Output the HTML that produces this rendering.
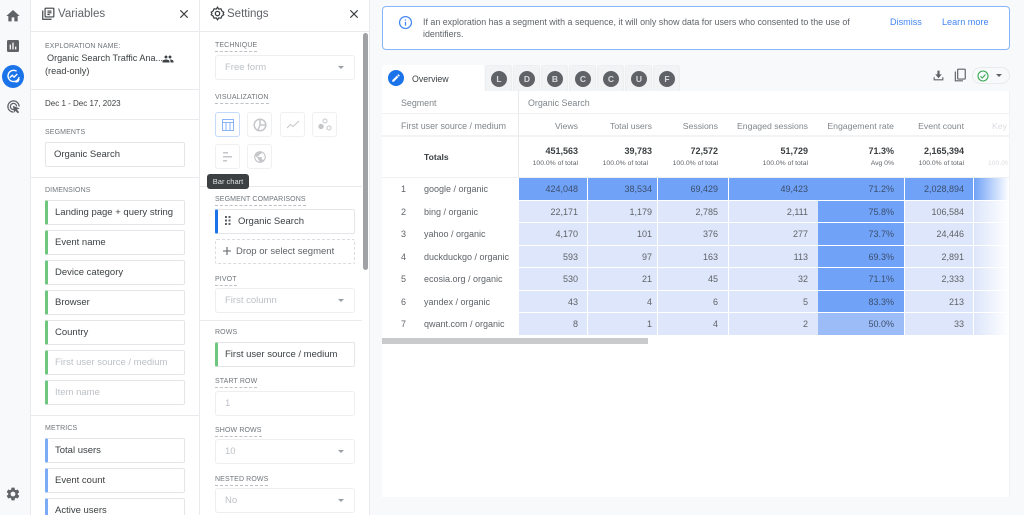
<!DOCTYPE html>
<html><head><meta charset="utf-8">
<style>
*{box-sizing:border-box;margin:0;padding:0}
html,body{width:1024px;height:515px;overflow:hidden;background:#f8f9fa}
body{font-family:"Liberation Sans",sans-serif;color:#5f6368;position:relative;filter:blur(.35px)}
.a{position:absolute;white-space:nowrap}
svg{position:absolute;display:block}
.line{position:absolute;background:#e8eaed;height:1px}
.t{position:absolute;white-space:nowrap;font-size:9.2px;line-height:12px}
.lab{position:absolute;white-space:nowrap;font-size:7px;line-height:10px;letter-spacing:.12px;color:#70757a;margin-top:1px}
.dash{border-bottom:1px dashed #bdc1c6;line-height:9px;padding-bottom:1px;margin-top:0}
.chip{position:absolute;width:140px;height:25px;background:#fff;border:1px solid #e3e5e8;border-radius:2px;font-size:9.5px;line-height:24px;color:#3c4043;white-space:nowrap}
.v{left:45px;padding-left:9px}
.s{left:215px;padding-left:9px}
.g{border-left:3px solid #6fc77f;padding-left:7px}
.b{border-left:3px solid #7baaf7;padding-left:7px}
.off{color:#bdc1c6}
.sel{position:absolute;left:215px;width:140px;height:25px;background:#fff;border:1px solid #eceef0;border-radius:3px;font-size:9.5px;line-height:24px;color:#bdc1c6;padding-left:9px}
.sel i{position:absolute;right:10px;top:10px;width:0;height:0;border:3px solid transparent;border-top:3px solid #9aa0a6;border-bottom:0}
.vb{position:absolute;width:25px;height:25px;background:#fff;border:1px solid #eff0f2;border-radius:3px}
.tab{position:absolute;top:65px;height:26px;width:27px;background:#f1f3f4;border:1px solid #eceef0;border-bottom:0;border-radius:3px 3px 0 0}
.tab b{position:absolute;left:5px;top:5px;width:16px;height:16px;border-radius:50%;background:#5f6368;color:#d8dadd;font-size:8.5px;line-height:16px;text-align:center;font-weight:bold}
.cell{position:absolute;top:0;height:21.5px;line-height:23px;text-align:right;font-size:9px;color:#5f6368;padding-right:4px}
.n{position:absolute;left:401px;font-size:9px;line-height:23px;top:0;color:#5f6368}
.d{position:absolute;left:424px;font-size:9px;line-height:23px;top:0;color:#5f6368;white-space:nowrap}
.row{position:absolute;left:0;width:1024px;height:21.5px}
.c1{left:519px;width:68px;padding-right:9px}
.c2{left:588px;width:69px;padding-right:5px}
.c3{left:658px;width:70px;padding-right:10px}
.c4{left:729px;width:89px;padding-right:10px}
.c5{left:818px;width:86px;padding-right:10px}
.c6{left:905px;width:68px;padding-right:9px}
.c7{left:974px;width:35px;background:linear-gradient(90deg,#dde6fa,#fff)}
.l{background:#dde6fa}
.h{background:#70a2f7;color:#3c4f6e}
.m{background:#9cbcf8;color:#3c4f6e}
.hd{position:absolute;top:120px;font-size:8.7px;line-height:13px;color:#80868b;text-align:right}
.tot{position:absolute;top:145px;font-size:9px;line-height:12px;font-weight:bold;color:#3c4043;text-align:right}
.pct{position:absolute;top:159px;font-size:6.8px;line-height:10px;color:#5f6368;text-align:right}
</style></head>
<body>

<!-- left rail -->
<svg style="left:5px;top:8px" width="16" height="16" viewBox="0 0 24 24"><path fill="#5f6368" d="M10 20v-6h4v6h5v-8h3L12 3 2 12h3v8z"/></svg>
<svg style="left:5px;top:38px" width="16" height="16" viewBox="0 0 24 24"><path fill="#5f6368" d="M19 3H5c-1.100 0-2 .9-2 2v14c0 1.100.9 2 2 2h14c1.100 0 2-.9 2-2V5c0-1.100-.9-2-2-2zM9 17H7v-7h2v7zm4 0h-2V7h2v10zm4 0h-2v-4h2v4z"/></svg>
<div class="a" style="left:2px;top:65px;width:22px;height:23px;border-radius:50%;background:#1a73e8"></div>
<svg style="left:6px;top:69px" width="15" height="15" viewBox="0 0 24 24" fill="none" stroke="#fff" stroke-width="2.200"><path d="M21 13a9 9 0 1 1-4-9.500"/><path d="M6 14l4-4 3 3 5-5"/><path d="M15 21l4-1 2-4"/></svg>
<svg style="left:6px;top:99px" width="15" height="15" viewBox="0 0 24 24" fill="none" stroke="#5f6368" stroke-width="2"><path d="M12 21a9 9 0 1 1 9-9"/><path d="M12 17a5 5 0 1 1 5-5"/><path fill="#5f6368" stroke="none" d="M11 11l11 4-4.500 2 3.500 4-2 2-4-4-2 3z"/></svg>
<svg style="left:5px;top:486px" width="16" height="16" viewBox="0 0 24 24"><path fill="#5f6368" d="M19.140 12.940c.04-.3.06-.61.06-.94 0-.32-.02-.64-.07-.94l2.030-1.580c.18-.14.23-.41.12-.61l-1.920-3.320c-.12-.22-.37-.29-.59-.22l-2.390.96c-.5-.38-1.030-.7-1.620-.94l-.36-2.540c-.04-.24-.24-.41-.48-.41h-3.840c-.24 0-.43.17-.47.41l-.36 2.540c-.59.24-1.130.57-1.620.94l-2.390-.96c-.22-.08-.47 0-.59.22L2.740 8.870c-.12.21-.08.47.12.61l2.030 1.580c-.05.3-.09.63-.09.94s.02.64.07.94l-2.030 1.580c-.18.14-.23.41-.12.61l1.920 3.320c.12.22.37.29.59.22l2.390-.96c.5.38 1.030.7 1.620.94l.36 2.540c.05.24.24.41.48.41h3.840c.24 0 .44-.17.47-.41l.36-2.540c.59-.24 1.130-.56 1.620-.94l2.390.96c.22.08.47 0 .59-.22l1.920-3.320c.12-.22.07-.47-.12-.61l-2.010-1.580zM12 15.600c-1.980 0-3.600-1.620-3.600-3.600s1.620-3.600 3.600-3.600 3.600 1.620 3.600 3.600-1.620 3.600-3.600 3.600z"/></svg>

<!-- panels -->
<div class="a" style="left:30px;top:0;width:340px;height:515px;background:#fff;border-left:1px solid #e8eaed;border-right:1px solid #e8eaed"></div>
<div class="a" style="left:199px;top:0;width:1px;height:515px;background:#e8eaed"></div>
<div class="line" style="left:31px;top:31px;width:338px"></div>
<div class="line" style="left:31px;top:89px;width:168px"></div>
<div class="line" style="left:31px;top:119px;width:168px"></div>
<div class="line" style="left:31px;top:177px;width:168px"></div>
<div class="line" style="left:31px;top:415px;width:168px"></div>
<div class="line" style="left:200px;top:186px;width:162px"></div>
<div class="line" style="left:200px;top:320px;width:162px"></div>

<!-- variables -->
<svg style="left:41px;top:7px" width="14" height="14" viewBox="0 0 24 24" fill="none" stroke="#3c4043" stroke-width="2"><rect x="7" y="2" width="15" height="15" rx="1"/><path d="M3 6v15h15"/><path d="M11 7h7M11 10h7M11 13h4"/></svg>
<div class="t" style="left:58px;top:7px;font-size:11.5px;line-height:14px;color:#5f6368">Variables</div>
<svg style="left:177px;top:7px" width="14" height="14" viewBox="0 0 24 24"><path fill="#3c4043" d="M19 6.410L17.590 5 12 10.590 6.410 5 5 6.410 10.590 12 5 17.590 6.410 19 12 13.410 17.590 19 19 17.590 13.410 12z"/></svg>
<div class="lab" style="left:45px;top:41px">EXPLORATION NAME:</div>
<div class="t" style="left:47px;top:52px;color:#3c4043;font-size:9.1px">Organic Search Traffic Ana...</div>
<svg style="left:162px;top:53px" width="12" height="12" viewBox="0 0 24 24"><path fill="#3c4043" d="M16 11c1.660 0 2.990-1.340 2.990-3S17.660 5 16 5c-1.660 0-3 1.340-3 3s1.340 3 3 3zm-8 0c1.660 0 2.990-1.340 2.990-3S9.660 5 8 5C6.340 5 5 6.340 5 8s1.340 3 3 3zm0 2c-2.330 0-7 1.170-7 3.500V19h14v-2.500c0-2.330-4.670-3.500-7-3.500zm8 0c-.29 0-.62.02-.97.05 1.160.84 1.970 1.970 1.970 3.450V19h6v-2.500c0-2.330-4.670-3.500-7-3.500z"/></svg>
<div class="t" style="left:45px;top:65px;color:#3c4043">(read-only)</div>
<div class="t" style="left:45px;top:98px;font-size:8px;color:#3c4043">Dec 1 - Dec 17, 2023</div>
<div class="lab" style="left:45px;top:127px">SEGMENTS</div>
<div class="chip v" style="top:142px;padding-left:8px">Organic Search</div>
<div class="lab" style="left:45px;top:185px">DIMENSIONS</div>
<div class="chip v g" style="top:200px">Landing page + query string</div>
<div class="chip v g" style="top:230px">Event name</div>
<div class="chip v g" style="top:260px">Device category</div>
<div class="chip v g" style="top:290px">Browser</div>
<div class="chip v g" style="top:320px">Country</div>
<div class="chip v g off" style="top:350px">First user source / medium</div>
<div class="chip v g off" style="top:380px">Item name</div>
<div class="lab" style="left:45px;top:423px">METRICS</div>
<div class="chip v b" style="top:438px">Total users</div>
<div class="chip v b" style="top:468px">Event count</div>
<div class="chip v b" style="top:498px">Active users</div>

<!-- settings -->
<svg style="left:210px;top:6px" width="15" height="15" viewBox="0 0 24 24" fill="none" stroke="#3c4043" stroke-width="2"><path d="M12 2l2 3 3.500-.5L19 8l3 2-1 2 1 2-3 2-1.500 3.500L14 19l-2 3-2-3-3.500.5L5 16l-3-2 1-2-1-2 3-2 1.500-3.500L10 5z"/><circle cx="12" cy="12" r="3.500"/></svg>
<div class="t" style="left:227px;top:7px;font-size:11.5px;line-height:14px;color:#5f6368">Settings</div>
<svg style="left:347px;top:7px" width="14" height="14" viewBox="0 0 24 24"><path fill="#3c4043" d="M19 6.410L17.590 5 12 10.590 6.410 5 5 6.410 10.590 12 5 17.590 6.410 19 12 13.410 17.590 19 19 17.590 13.410 12z"/></svg>
<div class="a" style="left:363px;top:33px;width:5px;height:237px;background:#a0a2a5;border-radius:3px"></div>

<div class="lab dash" style="left:215px;top:41px">TECHNIQUE</div>
<div class="sel" style="top:55px">Free form<i></i></div>
<div class="lab dash" style="left:215px;top:93px">VISUALIZATION</div>
<div class="vb" style="left:215px;top:112px;border-color:#c6dafc"><svg style="left:6px;top:6px" width="12" height="12" viewBox="0 0 12 12" fill="none" stroke="#8ab4f8" stroke-width="1"><rect x=".5" y=".5" width="11" height="11"/><path d="M.5 3.500h11M4 3.500v8M8 3.500v8"/></svg></div>
<div class="vb" style="left:247px;top:112px"><svg style="left:5px;top:5px" width="14" height="14" viewBox="0 0 14 14" fill="none" stroke="#c4c6c9" stroke-width="1.500"><circle cx="7" cy="7" r="5.800"/><path d="M7 1v6h6M7 7l-2 5"/></svg></div>
<div class="vb" style="left:280px;top:112px"><svg style="left:5px;top:6px" width="14" height="12" viewBox="0 0 14 12" fill="none" stroke="#c4c6c9" stroke-width="1"><path d="M1 9l3.500-3.500 2.500 2L13 2"/></svg></div>
<div class="vb" style="left:312px;top:112px"><svg style="left:5px;top:5px" width="14" height="14" viewBox="0 0 14 14" stroke="#c4c6c9"><circle cx="7" cy="3" r="2" fill="none"/><circle cx="3" cy="8.500" r="2.200" fill="#c4c6c9"/><circle cx="11" cy="10" r="2" fill="none"/></svg></div>
<div class="vb" style="left:215px;top:144px"><svg style="left:7px;top:7px" width="10" height="10" viewBox="0 0 10 10" fill="#c4c6c9"><rect width="5" height="1.500" y="0"/><rect width="9" height="1.500" y="4"/><rect width="4" height="1.500" y="8"/></svg></div>
<div class="vb" style="left:247px;top:144px"><svg style="left:5px;top:5px" width="14" height="14" viewBox="0 0 24 24"><path fill="#c4c6c9" d="M12 2C6.480 2 2 6.480 2 12s4.480 10 10 10 10-4.480 10-10S17.520 2 12 2zm-1 17.930c-3.950-.49-7-3.850-7-7.930 0-.62.08-1.210.21-1.790L9 15v1c0 1.100.9 2 2 2v1.930zm6.900-2.540c-.26-.81-1-1.390-1.900-1.390h-1v-3c0-.55-.45-1-1-1H8v-2h2c.55 0 1-.45 1-1V7h2c1.100 0 2-.9 2-2v-.41c2.930 1.190 5 4.060 5 7.410 0 2.080-.8 3.970-2.100 5.390z"/></svg></div>
<div class="a" style="left:207px;top:174px;width:42px;height:15px;background:#3c4043;border-radius:3px;color:#dfe1e5;font-size:7.5px;line-height:15px;text-align:center;z-index:3">Bar chart</div>

<div class="lab dash" style="left:215px;top:195px">SEGMENT COMPARISONS</div>
<div class="chip s" style="top:209px;border-left:3px solid #1a73e8;padding-left:20px">Organic Search</div>
<svg style="left:225px;top:216px" width="6" height="10" viewBox="0 0 6 10" fill="#5f6368"><rect x="0" y="0" width="2" height="2"/><rect x="3.500" y="0" width="2" height="2"/><rect x="0" y="3.500" width="2" height="2"/><rect x="3.500" y="3.500" width="2" height="2"/><rect x="0" y="7" width="2" height="2"/><rect x="3.500" y="7" width="2" height="2"/></svg>
<div class="chip s" style="top:239px;border:1px dashed #dadce0;color:#5f6368;padding-left:20px">Drop or select segment</div>
<svg style="left:222px;top:246px" width="10" height="10" viewBox="0 0 10 10" stroke="#5f6368" stroke-width="1.100"><path d="M5 1v8M1 5h8"/></svg>
<div class="lab dash" style="left:215px;top:275px">PIVOT</div>
<div class="sel" style="top:288px">First column<i></i></div>
<div class="lab" style="left:215px;top:327px">ROWS</div>
<div class="chip s g" style="top:342px;color:#3c4043">First user source / medium</div>
<div class="lab dash" style="left:215px;top:377px">START ROW</div>
<div class="sel" style="top:391px">1</div>
<div class="lab dash" style="left:215px;top:426px">SHOW ROWS</div>
<div class="sel" style="top:439px">10<i></i></div>
<div class="lab dash" style="left:215px;top:475px">NESTED ROWS</div>
<div class="sel" style="top:488px">No<i></i></div>

<!-- banner -->
<div class="a" style="left:382px;top:6px;width:628px;height:44px;background:#fff;border:1px solid #8ab4f8;border-radius:4px"></div>
<svg style="left:398px;top:15px" width="15" height="15" viewBox="0 0 24 24" fill="none" stroke="#4285f4" stroke-width="2"><circle cx="12" cy="12" r="9.500"/><path d="M12 11v6M12 7v2"/></svg>
<div class="t" style="left:423px;top:16px;font-size:8.9px">If an exploration has a segment with a sequence, it will only show data for users who consented to the use of</div>
<div class="t" style="left:423px;top:28px;font-size:8.9px">identifiers.</div>
<div class="t" style="left:890px;top:16px;color:#4285f4;font-size:9.1px">Dismiss</div>
<div class="t" style="left:942px;top:16px;color:#4285f4;font-size:9.1px">Learn more</div>

<!-- tabs -->
<div class="a" style="left:382px;top:65px;width:102px;height:27px;background:#fff;border-radius:3px 3px 0 0"></div>
<div class="a" style="left:388px;top:70px;width:16px;height:16px;border-radius:50%;background:#1a73e8"></div>
<svg style="left:391px;top:73px" width="10" height="10" viewBox="0 0 24 24"><path fill="#fff" d="M3 17.250V21h3.750L17.810 9.940l-3.750-3.750L3 17.250zM20.710 7.040c.39-.39.39-1.020 0-1.410l-2.340-2.340c-.39-.39-1.020-.39-1.410 0l-1.830 1.830 3.750 3.750 1.830-1.830z"/></svg>
<div class="t" style="left:412px;top:73px;font-size:8.8px;color:#3c4043">Overview</div>
<div class="tab" style="left:485px"><b>L</b></div>
<div class="tab" style="left:513px"><b>D</b></div>
<div class="tab" style="left:541px"><b>B</b></div>
<div class="tab" style="left:569px"><b>C</b></div>
<div class="tab" style="left:597px"><b>C</b></div>
<div class="tab" style="left:625px"><b>U</b></div>
<div class="tab" style="left:653px"><b>F</b></div>

<!-- toolbar -->
<svg style="left:932px;top:69px" width="13" height="13" viewBox="0 0 24 24"><path fill="#5f6368" d="M3 15h2v4h14v-4h2v6H3zM10 3h4v7h4l-6 7-6-7h4z"/></svg>
<svg style="left:953px;top:68px" width="14" height="14" viewBox="0 0 24 24" fill="none" stroke="#5f6368" stroke-width="2"><rect x="8" y="2" width="13" height="17" rx="1"/><path d="M4 6v16h13"/></svg>
<div class="a" style="left:972px;top:67px;width:38px;height:17px;border:1px solid #e8eaed;border-radius:9px;background:#f8f9fa"></div>
<svg style="left:977px;top:70px" width="12" height="12" viewBox="0 0 24 24" fill="none" stroke="#34a853" stroke-width="2.200"><circle cx="12" cy="12" r="10"/><path d="M7 12.500l3.500 3.500L17 9"/></svg>
<div class="a" style="left:996px;top:74px;width:0;height:0;border:3px solid transparent;border-top:3px solid #5f6368;border-bottom:0"></div>

<!-- table -->
<div class="a" style="left:382px;top:91px;width:628px;height:406px;background:#fff;border-right:1px solid #f1f3f4"></div>
<div class="line" style="left:382px;top:113px;width:628px;background:#eef0f2"></div>
<div class="line" style="left:382px;top:135px;width:628px;height:2px;background:#f1f3f4"></div>
<div class="line" style="left:382px;top:177px;width:628px;background:#eef0f2"></div>
<div class="a" style="left:518px;top:91px;width:1px;height:87px;background:#e8eaed"></div>
<div class="t" style="left:401px;top:97px;font-size:8.9px;color:#80868b">Segment</div>
<div class="t" style="left:528px;top:97px;font-size:8.9px;color:#80868b">Organic Search</div>
<div class="t" style="left:401px;top:120px;font-size:8.9px;color:#80868b">First user source / medium</div>
<div class="hd" style="left:520px;width:58px">Views</div>
<div class="hd" style="left:590px;width:62px">Total users</div>
<div class="hd" style="left:660px;width:58px">Sessions</div>
<div class="hd" style="left:730px;width:78px">Engaged sessions</div>
<div class="hd" style="left:820px;width:74px">Engagement rate</div>
<div class="hd" style="left:905px;width:59px">Event count</div>
<div class="hd" style="left:992px;width:16px;color:#dadce0;text-align:left;overflow:hidden">Key</div>
<div class="t" style="left:424px;top:151px;font-size:8.6px;font-weight:bold;color:#3c4043">Totals</div>
<div class="tot" style="left:520px;width:58px">451,563</div><div class="pct" style="left:520px;width:58px">100.0% of total</div>
<div class="tot" style="left:590px;width:62px">39,783</div><div class="pct" style="left:590px;width:58px">100.0% of total</div>
<div class="tot" style="left:660px;width:58px">72,572</div><div class="pct" style="left:660px;width:58px">100.0% of total</div>
<div class="tot" style="left:730px;width:78px">51,729</div><div class="pct" style="left:730px;width:78px">100.0% of total</div>
<div class="tot" style="left:820px;width:74px">71.3%</div><div class="pct" style="left:820px;width:74px">Avg 0%</div>
<div class="tot" style="left:905px;width:59px">2,165,394</div><div class="pct" style="left:905px;width:59px">100.0% of total</div>
<div class="pct" style="left:988px;width:20px;color:#dadce0;text-align:left;overflow:hidden">100.0%</div>

<div class="row" style="top:178px"><div class="n">1</div><div class="d">google / organic</div>
<div class="cell c1 h">424,048</div><div class="cell c2 h">38,534</div><div class="cell c3 h">69,429</div><div class="cell h" style="left:729px;width:175px;padding-right:96px">49,423</div><div class="cell c5" style="color:#3c4f6e">71.2%</div><div class="cell c6 h">2,028,894</div><div class="cell c7" style="background:linear-gradient(90deg,#70a2f7,#fff)"></div></div>
<div class="row" style="top:200.5px"><div class="n">2</div><div class="d">bing / organic</div>
<div class="cell c1 l">22,171</div><div class="cell c2 l">1,179</div><div class="cell c3 l">2,785</div><div class="cell c4 l">2,111</div><div class="cell c5 h">75.8%</div><div class="cell c6 l">106,584</div><div class="cell c7"></div></div>
<div class="row" style="top:223px"><div class="n">3</div><div class="d">yahoo / organic</div>
<div class="cell c1 l">4,170</div><div class="cell c2 l">101</div><div class="cell c3 l">376</div><div class="cell c4 l">277</div><div class="cell c5 h">73.7%</div><div class="cell c6 l">24,446</div><div class="cell c7"></div></div>
<div class="row" style="top:245.5px"><div class="n">4</div><div class="d">duckduckgo / organic</div>
<div class="cell c1 l">593</div><div class="cell c2 l">97</div><div class="cell c3 l">163</div><div class="cell c4 l">113</div><div class="cell c5 h">69.3%</div><div class="cell c6 l">2,891</div><div class="cell c7"></div></div>
<div class="row" style="top:268px"><div class="n">5</div><div class="d">ecosia.org / organic</div>
<div class="cell c1 l">530</div><div class="cell c2 l">21</div><div class="cell c3 l">45</div><div class="cell c4 l">32</div><div class="cell c5 h">71.1%</div><div class="cell c6 l">2,333</div><div class="cell c7"></div></div>
<div class="row" style="top:290.5px"><div class="n">6</div><div class="d">yandex / organic</div>
<div class="cell c1 l">43</div><div class="cell c2 l">4</div><div class="cell c3 l">6</div><div class="cell c4 l">5</div><div class="cell c5 h">83.3%</div><div class="cell c6 l">213</div><div class="cell c7"></div></div>
<div class="row" style="top:313px"><div class="n">7</div><div class="d">qwant.com / organic</div>
<div class="cell c1 l">8</div><div class="cell c2 l">1</div><div class="cell c3 l">4</div><div class="cell c4 l">2</div><div class="cell c5 m">50.0%</div><div class="cell c6 l">33</div><div class="cell c7"></div></div>
<div class="a" style="left:382px;top:338px;width:266px;height:6px;background:#c9cacb"></div>
</body></html>
